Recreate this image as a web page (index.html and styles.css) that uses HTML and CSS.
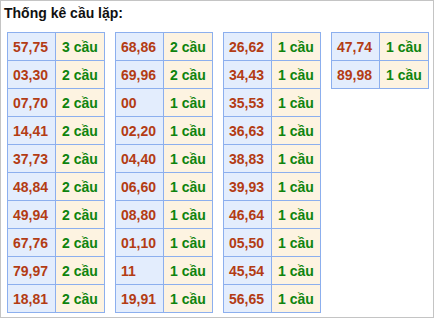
FILE: index.html
```html
<!DOCTYPE html>
<html lang="vi">
<head>
<meta charset="utf-8">
<link rel="stylesheet" href="styles.css">
</head>
<body>
<div class="box">
  <div class="title">Thống kê cầu lặp:</div>
  <div class="tables">
    <table class="tk">
      <tr><td class="n">57,75</td><td class="c">3 cầu</td></tr>
      <tr><td class="n">03,30</td><td class="c">2 cầu</td></tr>
      <tr><td class="n">07,70</td><td class="c">2 cầu</td></tr>
      <tr><td class="n">14,41</td><td class="c">2 cầu</td></tr>
      <tr><td class="n">37,73</td><td class="c">2 cầu</td></tr>
      <tr><td class="n">48,84</td><td class="c">2 cầu</td></tr>
      <tr><td class="n">49,94</td><td class="c">2 cầu</td></tr>
      <tr><td class="n">67,76</td><td class="c">2 cầu</td></tr>
      <tr><td class="n">79,97</td><td class="c">2 cầu</td></tr>
      <tr><td class="n">18,81</td><td class="c">2 cầu</td></tr>
    </table>
    <table class="tk">
      <tr><td class="n">68,86</td><td class="c">2 cầu</td></tr>
      <tr><td class="n">69,96</td><td class="c">2 cầu</td></tr>
      <tr><td class="n">00</td><td class="c">1 cầu</td></tr>
      <tr><td class="n">02,20</td><td class="c">1 cầu</td></tr>
      <tr><td class="n">04,40</td><td class="c">1 cầu</td></tr>
      <tr><td class="n">06,60</td><td class="c">1 cầu</td></tr>
      <tr><td class="n">08,80</td><td class="c">1 cầu</td></tr>
      <tr><td class="n">01,10</td><td class="c">1 cầu</td></tr>
      <tr><td class="n">11</td><td class="c">1 cầu</td></tr>
      <tr><td class="n">19,91</td><td class="c">1 cầu</td></tr>
    </table>
    <table class="tk">
      <tr><td class="n">26,62</td><td class="c">1 cầu</td></tr>
      <tr><td class="n">34,43</td><td class="c">1 cầu</td></tr>
      <tr><td class="n">35,53</td><td class="c">1 cầu</td></tr>
      <tr><td class="n">36,63</td><td class="c">1 cầu</td></tr>
      <tr><td class="n">38,83</td><td class="c">1 cầu</td></tr>
      <tr><td class="n">39,93</td><td class="c">1 cầu</td></tr>
      <tr><td class="n">46,64</td><td class="c">1 cầu</td></tr>
      <tr><td class="n">05,50</td><td class="c">1 cầu</td></tr>
      <tr><td class="n">45,54</td><td class="c">1 cầu</td></tr>
      <tr><td class="n">56,65</td><td class="c">1 cầu</td></tr>
    </table>
    <table class="tk">
      <tr><td class="n">47,74</td><td class="c">1 cầu</td></tr>
      <tr><td class="n">89,98</td><td class="c">1 cầu</td></tr>
    </table>
  </div>
</div>
</body>
</html>
```
FILE: styles.css
```css
html, body {
  margin: 0;
  padding: 0;
  background: #fff;
}
body {
  font-family: "Liberation Sans", Arial, sans-serif;
  width: 434px;
  height: 319px;
}
.box {
  box-sizing: border-box;
  width: 434px;
  height: 318px;
  border: 1px solid #c4c4c4;
  padding: 4px 0 0 6px;
}
.title {
  font-weight: bold;
  font-size: 14px;
  line-height: 17px;
  color: #111;
  margin-left: -3px;
}
.tables {
  display: flex;
  align-items: flex-start;
  gap: 10px;
  margin-top: 10px;
}
.tk {
  border-collapse: collapse;
  table-layout: fixed;
  width: 98px;
  border: 1px solid #8cafee;
  font-size: 14px;
  font-weight: bold;
}
.tk td {
  box-sizing: border-box;
  border: 1px solid #8cafee;
  height: 28px;
  padding: 0 0 0 5px;
  vertical-align: middle;
  line-height: 16px;
  white-space: nowrap;
}
.tk .n {
  width: 48px;
  background: #e3edfd;
  color: #b33c14;
}
.tk .c {
  background: #fdf3e1;
  color: #0e840e;
  padding-left: 6px;
}
```
